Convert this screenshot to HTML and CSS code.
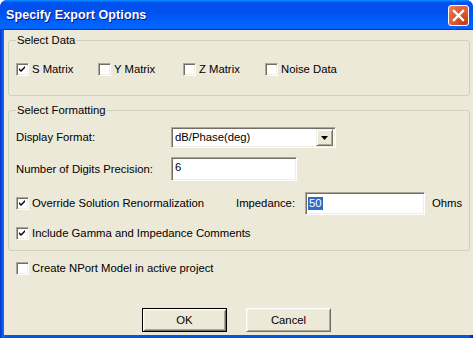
FILE: index.html
```html
<!DOCTYPE html>
<html>
<head>
<meta charset="utf-8">
<title>Specify Export Options</title>
<link rel="stylesheet" href="styles.css">
</head>
<body>
<div class="window">
  <div class="titlebar">
    <span class="title">Specify Export Options</span>
    <span class="close" aria-label="Close">
      <svg width="13" height="13" viewBox="0 0 13 13"><path d="M2 2 L11 11 M11 2 L2 11" stroke="#fff" stroke-width="2.4" stroke-linecap="square"/></svg>
    </span>
  </div>
  <div class="frame">
    <div class="client">
      <fieldset class="group group-data">
        <legend>Select Data</legend>
        <div class="check-row">
          <label class="check item-s"><span class="box"><svg class="tick" width="11" height="11" viewBox="0 0 11 11"><polygon points="2,4 4,6 8,2 8,4 4,8 2,6" fill="#000"/></svg></span>S Matrix</label>
          <label class="check item-y"><span class="box"></span>Y Matrix</label>
          <label class="check item-z"><span class="box"></span>Z Matrix</label>
          <label class="check"><span class="box"></span>Noise Data</label>
        </div>
      </fieldset>

      <fieldset class="group group-fmt">
        <legend>Select Formatting</legend>
        <div class="row row-format">
          <span class="lbl">Display Format:</span>
          <div class="combo">
            <span class="combo-text">dB/Phase(deg)</span>
            <span class="combo-btn"><svg width="7" height="4" viewBox="0 0 7 4"><polygon points="0,0 7,0 3.5,4" fill="#000"/></svg></span>
          </div>
        </div>
        <div class="row row-prec">
          <span class="lbl">Number of Digits Precision:</span>
          <div class="field field-prec">6</div>
        </div>
        <div class="row row-override">
          <label class="check item-override"><span class="box"><svg class="tick" width="11" height="11" viewBox="0 0 11 11"><polygon points="2,4 4,6 8,2 8,4 4,8 2,6" fill="#000"/></svg></span>Override Solution Renormalization</label>
          <span class="lbl-imp">Impedance:</span>
          <div class="field field-imp"><span class="sel">50</span></div>
          <span class="ohms">Ohms</span>
        </div>
        <div class="row row-gamma">
          <label class="check"><span class="box"><svg class="tick" width="11" height="11" viewBox="0 0 11 11"><polygon points="2,4 4,6 8,2 8,4 4,8 2,6" fill="#000"/></svg></span>Include Gamma and Impedance Comments</label>
        </div>
      </fieldset>

      <div class="row row-nport">
        <label class="check"><span class="box"></span>Create NPort Model in active project</label>
      </div>

      <div class="buttons">
        <button class="btn btn-default">OK</button>
        <button class="btn">Cancel</button>
      </div>
    </div>
  </div>
</div>
</body>
</html>
```
FILE: styles.css
```css
* { box-sizing: border-box; }
html, body { margin: 0; padding: 0; }
body {
  width: 473px;
  height: 338px;
  overflow: hidden;
  background: #ffffff;
  font-family: "Liberation Sans", Arial, sans-serif;
  font-size: 11.3px;
  line-height: 13px;
  color: #000;
}
.window {
  width: 473px;
  height: 338px;
  display: flex;
  flex-direction: column;
  border-radius: 7px 7px 0 0;
  overflow: hidden;
  background: #0847dc;
}
.titlebar {
  height: 30px;
  flex: none;
  display: flex;
  align-items: center;
  justify-content: space-between;
  padding: 0 4px 0 6px;
  background: linear-gradient(180deg, #0997ff, #0053ee 8%, #0050ee 40%, #06f 88%, #06f 93%, #005bff 95%, #003dd7 96%, #003dd7);
}
.title {
  color: #fff;
  font-weight: bold;
  font-size: 12.5px;
  letter-spacing: 0.1px;
  text-shadow: 1px 1px #0f1089;
  margin-top: 1px;
}
.close {
  width: 21px;
  height: 21px;
  border: 1px solid #fff;
  border-radius: 3px;
  background: radial-gradient(circle at 80% 85%, #c23c10 0, #d9532a 35%, #e36640 70%, #ee8f6c 100%);
  display: flex;
  align-items: center;
  justify-content: center;
  margin-top: 1px;
}
.frame {
  flex: 1;
  display: flex;
  padding: 0 3px 3px 4px;
  background: linear-gradient(90deg, #0831d9 0, #0855dd 2px, #166aee 4px, #0855dd 5px, #0855dd 469px, #0831d9 471px, #001ea0 473px);
}
.client {
  flex: 1;
  display: flex;
  flex-direction: column;
  background: #ece9d8;
}

/* group boxes */
.group {
  margin: 0 3px 0 4px;
  border: 1px solid #d0d0bf;
  border-radius: 3px;
  padding-left: 7px;
  padding-right: 7px;
  min-width: 0;
}
.group legend {
  padding: 0 1px;
  margin-left: 0;
  line-height: 13px;
  color: #000;
}
.group-data {
  margin-top: 4px;
  padding-top: 16px;
  padding-bottom: 19px;
}
.group-fmt {
  margin-top: 8px;
  padding-top: 10px;
  padding-bottom: 7px;
}

/* checkboxes */
.check {
  display: flex;
  align-items: center;
  white-space: nowrap;
}
.box {
  width: 13px;
  height: 13px;
  flex: none;
  margin-right: 3px;
  background: #fff;
  border: 1px solid;
  border-color: #aca899 #fff #fff #aca899;
  box-shadow: inset 1px 1px #716f64, inset -1px -1px #f1efe2;
  display: flex;
  align-items: center;
  justify-content: center;
}
.tick { display: block; }
.check-row {
  display: flex;
  align-items: center;
  height: 13px;
}
.item-s { width: 82px; }
.item-y { width: 85px; }
.item-z { width: 82px; }

/* rows */
.row {
  display: flex;
  align-items: center;
}
.lbl { width: 155px; flex: none; }
.row-format { height: 21px; }
.row-prec { height: 24px; margin-top: 9px; }
.row-override { height: 23px; margin-top: 11px; }
.row-gamma { height: 20px; margin-top: 8px; }
.item-override { width: 220px; }
.lbl-imp { width: 69px; flex: none; }
.ohms { margin-left: 7px; }

.field, .combo {
  background: #fff;
  border: 1px solid;
  border-color: #aca899 #fff #fff #aca899;
  box-shadow: inset 1px 1px #716f64, inset -1px -1px #f1efe2;
}
.combo {
  width: 165px;
  height: 21px;
  display: flex;
  align-items: center;
  justify-content: space-between;
  padding: 2px 2px 2px 3px;
}
.combo-btn {
  width: 17px;
  height: 17px;
  background: #ece9d8;
  border: 1px solid;
  border-color: #f1efe2 #716f64 #716f64 #f1efe2;
  box-shadow: inset 1px 1px #fff, inset -1px -1px #aca899;
  display: flex;
  align-items: center;
  justify-content: center;
}
.field {
  display: flex;
  align-items: flex-start;
  padding: 3px 3px;
}
.field-prec { width: 126px; height: 24px; }
.field-imp { width: 120px; height: 23px; align-items: center; padding: 2px 2px; }
.sel {
  background: #316ac5;
  color: #fff;
  padding: 0 1px;
}

.row-nport {
  height: 20px;
  margin-top: 7px;
  padding-left: 12px;
}

/* buttons */
.buttons {
  display: flex;
  gap: 19px;
  padding-left: 138px;
  margin-top: 30px;
}
.btn {
  width: 85px;
  height: 24px;
  font: inherit;
  color: #000;
  background: #ece9d8;
  border: 1px solid;
  border-color: #fff #716f64 #716f64 #fff;
  box-shadow: inset 1px 1px #f1efe2, inset -1px -1px #aca899;
  padding: 0;
}
.btn-default {
  border-color: #000;
  box-shadow: inset 1px 1px #fff, inset -1px -1px #716f64, inset 2px 2px #f1efe2, inset -2px -2px #aca899;
}
```
